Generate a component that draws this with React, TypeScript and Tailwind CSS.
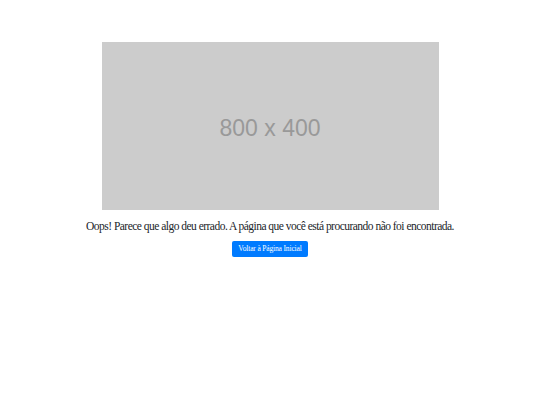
export default function App() {
  return (
    <div className="flex min-h-[405px] w-full flex-col items-center bg-white pt-[42px]" style={{ fontFamily: '"Liberation Serif", serif' }}>
      <div className="flex h-[168px] w-[337px] items-center justify-center bg-[#cccccc] pt-[4px]">
        <span className="text-[23px] text-[#999999]" style={{ fontFamily: '"Liberation Sans", sans-serif' }}>800 x 400</span>
      </div>
      <p className="mt-[8px] text-[11.5px] leading-[16px] tracking-[-0.52px] text-[#212529]">
        Oops! Parece que algo deu errado. A página que você está procurando não foi encontrada.
      </p>
      <button className="mt-[7px] h-[16px] rounded-[2px] bg-[#007bff] px-[6px] text-[7.5px] leading-[16px] tracking-[-0.15px] text-white">
        Voltar à Página Inicial
      </button>
    </div>
  );
}
